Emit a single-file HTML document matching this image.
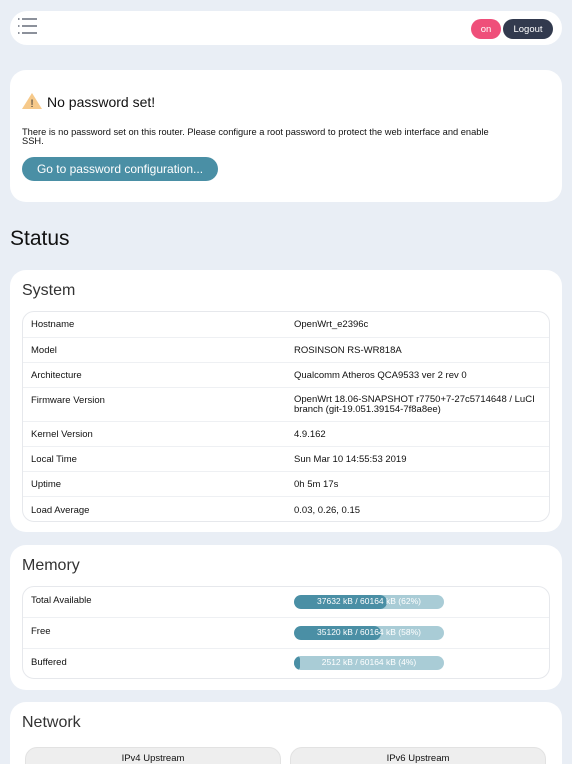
<!DOCTYPE html><html><head><style>
*{box-sizing:border-box;margin:0;padding:0}
html,body{width:572px;height:764px;overflow:hidden}
body{background:#e9eef5;font-family:"Liberation Sans","DejaVu Sans",sans-serif;color:#111;position:relative}
.a{position:absolute}
.card{position:absolute;background:#fff;border-radius:16px}
.t{font-size:9.5px;position:absolute;white-space:nowrap}
.tbl{position:absolute;border:1px solid #e6e8ec;border-radius:12px}
.sep{position:absolute;left:0;right:0;height:1px;background:#eef0f3}
.bar{position:absolute;left:271px;width:150px;height:14px;border-radius:7px;background:#a9ccd6;overflow:hidden}
.bar i{position:absolute;left:0;top:0;bottom:0;background:#4a8fa5;border-radius:7px}
.bar span{position:absolute;left:0;right:0;top:1px;text-align:center;color:#fff;font-size:8.5px}
.pill{position:absolute;display:flex;align-items:center;justify-content:center;border-radius:10px;color:#fff;font-size:9.5px;height:20px;top:8px}
</style></head><body>
<div class="card" style="left:10px;top:11px;width:552px;height:34px;border-radius:17px">
<svg class="a" style="left:7px;top:6px" width="22" height="20"><g stroke="#5a6270" stroke-width="1.4"><line x1="1" y1="2" x2="2.5" y2="2"/><line x1="5" y1="2" x2="20" y2="2"/><line x1="1" y1="9" x2="2.5" y2="9"/><line x1="5" y1="9" x2="20" y2="9"/><line x1="1" y1="16" x2="2.5" y2="16"/><line x1="5" y1="16" x2="20" y2="16"/></g></svg>
<div class="pill" style="left:461px;width:30px;background:#ef4f7a">on</div>
<div class="pill" style="left:493px;width:50px;background:#323a4e">Logout</div>
</div>
<div class="card" style="left:10px;top:70px;width:552px;height:132px">
<svg class="a" style="left:11px;top:22px" width="22" height="18"><path d="M11 1L21 17H1Z" fill="#f6c98a"/><text x="11" y="15" font-size="11" text-anchor="middle" fill="#333" font-family="Liberation Sans">!</text></svg>
<div class="t" style="left:37px;top:24px;font-size:14px">No password set!</div>
<div class="t" style="left:12px;top:58px;font-size:9.3px;line-height:9px">There is no password set on this router. Please configure a root password to protect the web interface and enable<br>SSH.</div>
<div class="a" style="left:12px;top:87px;width:196px;height:24px;border-radius:12px;background:#4a8fa5;color:#fff;font-size:12px;line-height:24px;text-align:center">Go to password configuration...</div>
</div>
<div class="t" style="left:10px;top:227px;font-size:21px">Status</div>
<div class="card" style="left:10px;top:270px;width:552px;height:262px">
<div class="t" style="left:12px;top:12px;font-size:16px;color:#333">System</div>
<div class="tbl" style="left:12px;top:41px;width:528px;height:211px">
<div class="sep" style="top:25px"></div><div class="sep" style="top:50px"></div><div class="sep" style="top:75px"></div><div class="sep" style="top:109px"></div><div class="sep" style="top:134px"></div><div class="sep" style="top:159px"></div><div class="sep" style="top:184px"></div>
<div class="t" style="left:8px;top:7px">Hostname</div><div class="t" style="left:271px;top:7px">OpenWrt_e2396c</div>
<div class="t" style="left:8px;top:33px">Model</div><div class="t" style="left:271px;top:33px">ROSINSON RS-WR818A</div>
<div class="t" style="left:8px;top:58px">Architecture</div><div class="t" style="left:271px;top:58px">Qualcomm Atheros QCA9533 ver 2 rev 0</div>
<div class="t" style="left:8px;top:83px">Firmware Version</div><div class="t" style="left:271px;top:83px;line-height:10px">OpenWrt 18.06-SNAPSHOT r7750+7-27c5714648 / LuCI<br>branch (git-19.051.39154-7f8a8ee)</div>
<div class="t" style="left:8px;top:117px">Kernel Version</div><div class="t" style="left:271px;top:117px">4.9.162</div>
<div class="t" style="left:8px;top:142px">Local Time</div><div class="t" style="left:271px;top:142px">Sun Mar 10 14:55:53 2019</div>
<div class="t" style="left:8px;top:167px">Uptime</div><div class="t" style="left:271px;top:167px">0h 5m 17s</div>
<div class="t" style="left:8px;top:193px">Load Average</div><div class="t" style="left:271px;top:193px">0.03, 0.26, 0.15</div>
</div></div>
<div class="card" style="left:10px;top:545px;width:552px;height:145px">
<div class="t" style="left:12px;top:12px;font-size:16px;color:#333">Memory</div>
<div class="tbl" style="left:12px;top:41px;width:528px;height:93px">
<div class="sep" style="top:30px"></div><div class="sep" style="top:61px"></div>
<div class="t" style="left:8px;top:8px">Total Available</div><div class="bar" style="top:8px"><i style="width:62%"></i><span>37632 kB / 60164 kB (62%)</span></div>
<div class="t" style="left:8px;top:39px">Free</div><div class="bar" style="top:39px"><i style="width:58%"></i><span>35120 kB / 60164 kB (58%)</span></div>
<div class="t" style="left:8px;top:70px">Buffered</div><div class="bar" style="top:69px"><i style="width:4%"></i><span>2512 kB / 60164 kB (4%)</span></div>
</div></div>
<div class="card" style="left:10px;top:702px;width:552px;height:80px">
<div class="t" style="left:12px;top:12px;font-size:16px;color:#333">Network</div>
<div class="a" style="left:15px;top:45px;width:256px;height:30px;border-radius:12px;background:#eee;border:1px solid #e2e2e2;font-size:9.5px;text-align:center;padding-top:5px">IPv4 Upstream</div>
<div class="a" style="left:280px;top:45px;width:256px;height:30px;border-radius:12px;background:#eee;border:1px solid #e2e2e2;font-size:9.5px;text-align:center;padding-top:5px">IPv6 Upstream</div>
</div>
</body></html>
